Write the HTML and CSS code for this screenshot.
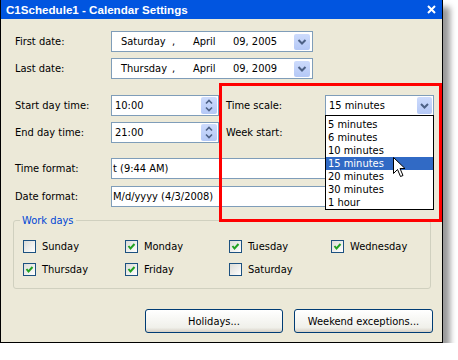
FILE: index.html
```html
<!DOCTYPE html>
<html lang="en">
<head>
    <meta charset="UTF-8">
    <meta name="viewport" content="width=device-width, initial-scale=1.0">
    <title>C1Schedule1 - Calendar Settings</title>
    <link rel="stylesheet" href="styles.css">
</head>
<body>

    <div class="window">
        <div class="titlebar">
            <span class="title">C1Schedule1 - Calendar Settings</span>
            <svg class="close" width="9" height="9" viewBox="0 0 9 9"><path d="M1 1 L8 8 M8 1 L1 8" stroke="#fff" stroke-width="2" fill="none"/></svg>
        </div>

        <div class="content">
            <div class="row row-first">
                <span class="lbl">First date:</span>
                <div class="field date-field">
                    <span class="dp-day">Saturday</span><span class="dp-comma">,</span><span class="dp-month">April</span><span>09, 2005</span>
                    <span class="drop-btn"><svg width="16" height="16" viewBox="0 0 16 16"><path d="M4.5 6 L8 9.5 L11.5 6" stroke="#4d6185" stroke-width="2" fill="none"/></svg></span>
                </div>
            </div>

            <div class="row row-second">
                <span class="lbl">Last date:</span>
                <div class="field date-field">
                    <span class="dp-day">Thursday</span><span class="dp-comma">,</span><span class="dp-month">April</span><span>09, 2009</span>
                    <span class="drop-btn"><svg width="16" height="16" viewBox="0 0 16 16"><path d="M4.5 6 L8 9.5 L11.5 6" stroke="#4d6185" stroke-width="2" fill="none"/></svg></span>
                </div>
            </div>

            <div class="row row-third">
                <span class="lbl">Start day time:</span>
                <div class="field spin-field">
                    10:00
                    <span class="spin-btn">
                        <svg width="16" height="17" viewBox="0 0 16 17"><path d="M5 6.5 L8 3.5 L11 6.5" stroke="#4d6185" stroke-width="1.6" fill="none"/><path d="M5 10.5 L8 13.5 L11 10.5" stroke="#4d6185" stroke-width="1.6" fill="none"/></svg>
                    </span>
                </div>
                <span class="lbl-right">Time scale:</span>
                <div class="combo-wrap">
                    <div class="field combo">
                        15 minutes
                        <span class="combo-btn"><svg width="15" height="17" viewBox="0 0 15 17"><path d="M4 7 L7.5 10.5 L11 7" stroke="#4d6185" stroke-width="2" fill="none"/></svg></span>
                    </div>
                    <div class="drop-list">
                        <div class="item">5 minutes</div>
                        <div class="item">6 minutes</div>
                        <div class="item">10 minutes</div>
                        <div class="item selected">15 minutes</div>
                        <div class="item">20 minutes</div>
                        <div class="item">30 minutes</div>
                        <div class="item">1 hour</div>
                        <svg class="cursor" width="13" height="21" viewBox="0 0 13 21"><path d="M0.5 0.5 L0.5 16.5 L4.5 12.5 L7.5 19.5 L10 18.5 L7 11.5 L12 11.5 Z" fill="#fff" stroke="#000" stroke-width="1"/></svg>
                    </div>
                </div>
            </div>

            <div class="row row-fourth">
                <span class="lbl">End day time:</span>
                <div class="field spin-field">
                    21:00
                    <span class="spin-btn">
                        <svg width="16" height="17" viewBox="0 0 16 17"><path d="M5 6.5 L8 3.5 L11 6.5" stroke="#4d6185" stroke-width="1.6" fill="none"/><path d="M5 10.5 L8 13.5 L11 10.5" stroke="#4d6185" stroke-width="1.6" fill="none"/></svg>
                    </span>
                </div>
                <span class="lbl-right">Week start:</span>
                <div class="field combo week-combo"></div>
            </div>

            <div class="row row-fifth">
                <span class="lbl">Time format:</span>
                <div class="field format-field">t (9:44 AM)</div>
            </div>

            <div class="row row-sixth">
                <span class="lbl">Date format:</span>
                <div class="field format-field">M/d/yyyy (4/3/2008)</div>
            </div>

            <fieldset class="workdays">
                <legend>Work days</legend>
                <div class="days">
                    <div class="day"><span class="cb"></span>Sunday</div>
                    <div class="day"><span class="cb"><svg width="11" height="11" viewBox="0 0 11 11"><path d="M2.5 5 L4.5 7.5 L8.5 3" stroke="#21a121" stroke-width="2" fill="none"/></svg></span>Monday</div>
                    <div class="day"><span class="cb"><svg width="11" height="11" viewBox="0 0 11 11"><path d="M2.5 5 L4.5 7.5 L8.5 3" stroke="#21a121" stroke-width="2" fill="none"/></svg></span>Tuesday</div>
                    <div class="day"><span class="cb"><svg width="11" height="11" viewBox="0 0 11 11"><path d="M2.5 5 L4.5 7.5 L8.5 3" stroke="#21a121" stroke-width="2" fill="none"/></svg></span>Wednesday</div>
                    <div class="day"><span class="cb"><svg width="11" height="11" viewBox="0 0 11 11"><path d="M2.5 5 L4.5 7.5 L8.5 3" stroke="#21a121" stroke-width="2" fill="none"/></svg></span>Thursday</div>
                    <div class="day"><span class="cb"><svg width="11" height="11" viewBox="0 0 11 11"><path d="M2.5 5 L4.5 7.5 L8.5 3" stroke="#21a121" stroke-width="2" fill="none"/></svg></span>Friday</div>
                    <div class="day"><span class="cb"></span>Saturday</div>
                </div>
            </fieldset>

            <div class="buttons">
                <button class="btn btn-holidays">Holidays...</button>
                <button class="btn btn-weekend">Weekend exceptions...</button>
            </div>
        </div>

        <div class="highlight"></div>
    </div>

</body>
</html>
```

FILE: styles.css
```css
body {
    margin: 0;
    background-color: #fff;
    font-family: "DejaVu Sans Condensed", "DejaVu Sans", sans-serif;
    font-size: 11px;
    color: #000;
}

.window {
    position: relative;
    width: 441px;
    height: 342px;
    border: 1px solid #000;
    border-top: 0;
    background-color: #ece9d8;
    box-shadow: 7px 7px 6px rgba(0, 0, 0, 0.4);
}

.titlebar {
    height: 19px;
    background-color: #0155e0;
    color: #fff;
    display: flex;
    align-items: center;
    justify-content: space-between;
    padding: 0 6px 0 5px;
}

.title {
    font-family: "Liberation Sans", sans-serif;
    font-weight: bold;
    font-size: 11.6px;
}

.close {
    margin-top: -1px;
}

.content {
    padding: 12px 0 0 14px;
}

.row {
    display: flex;
    align-items: center;
    height: 21px;
}

.row-second { margin-top: 6px; }
.row-third { margin-top: 16px; }
.row-fourth { margin-top: 6px; }
.row-fifth { margin-top: 15px; }
.row-sixth { margin-top: 7px; }

.lbl {
    width: 96px;
}

.lbl-right {
    width: 99px;
    margin-left: 7px;
}

.field {
    position: relative;
    box-sizing: border-box;
    height: 21px;
    border: 1px solid #7f9db9;
    background-color: #fff;
    display: flex;
    align-items: center;
    white-space: nowrap;
}

.date-field {
    width: 202px;
    padding-left: 9px;
}

.dp-day { width: 51px; }
.dp-comma { width: 21px; }
.dp-month { width: 40px; }

.drop-btn {
    position: absolute;
    right: 2px;
    top: 2px;
    width: 16px;
    height: 16px;
    border-radius: 2px;
    background: linear-gradient(#cddbfc, #b4c8f6);
}

.drop-btn svg, .combo-btn svg, .spin-btn svg {
    display: block;
}

.spin-field {
    width: 108px;
    padding-left: 3px;
}

.spin-btn {
    position: absolute;
    right: 1px;
    top: 1px;
    width: 16px;
    height: 17px;
    border-radius: 2px;
    background: linear-gradient(#cddbfc, #b4c8f6);
}

.combo-wrap {
    position: relative;
    margin-top: -1px;
}

.combo {
    width: 109px;
    padding-left: 3px;
}

.week-combo {
    border-color: #555;
}

.combo-btn {
    position: absolute;
    right: 1px;
    top: 1px;
    width: 15px;
    height: 17px;
    border-radius: 2px;
    background: linear-gradient(#cddbfc, #b4c8f6);
}

.drop-list {
    position: absolute;
    left: 0;
    top: 20px;
    z-index: 2;
    box-sizing: border-box;
    width: 109px;
    padding: 2px 0 0;
    height: 95px;
    border: 1px solid #000;
    background-color: #fff;
}

.drop-list .item {
    height: 13px;
    line-height: 13px;
    padding-left: 2px;
}

.drop-list .selected {
    background-color: #316ac5;
    color: #fff;
}

.cursor {
    position: absolute;
    left: 67px;
    top: 41px;
}

.format-field {
    width: 321px;
    padding-left: 1px;
}

.workdays {
    box-sizing: border-box;
    width: 418px;
    margin: 7px 0 0 -2px;
    padding: 13px 0 12px 9px;
    border: 1px solid #d0d0bf;
    border-radius: 3px;
}

.workdays legend {
    color: #0046d5;
    padding: 0 2px;
    margin-left: -3px;
    line-height: 13px;
}

.days {
    display: grid;
    grid-template-columns: 102px 104px 102px auto;
    row-gap: 10px;
}

.day {
    display: flex;
    align-items: center;
    height: 13px;
}

.cb {
    box-sizing: border-box;
    width: 13px;
    height: 13px;
    margin-right: 6px;
    border: 1px solid #1c5180;
    background: linear-gradient(135deg, #dcdcd7, #fff);
}

.cb svg {
    display: block;
}

.buttons {
    display: flex;
    gap: 11px;
    margin: 20px 0 0 130px;
}

.btn {
    box-sizing: border-box;
    height: 24px;
    border: 1px solid #003c74;
    border-radius: 3px;
    background: linear-gradient(#fff, #f0f0ea 80%, #d6d0c5);
    font-family: inherit;
    font-size: 11px;
    color: #000;
    padding: 0;
}

.btn-holidays { width: 138px; }
.btn-weekend { width: 139px; }

.highlight {
    position: absolute;
    left: 218px;
    top: 83px;
    z-index: 3;
    box-sizing: border-box;
    width: 223px;
    height: 139px;
    border: 3px solid #f00;
}
```
